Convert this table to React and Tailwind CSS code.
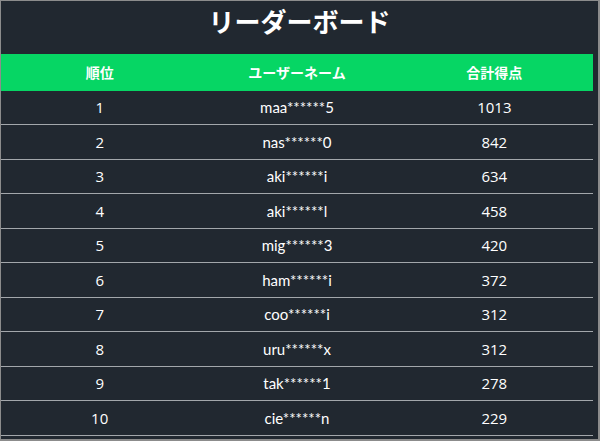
const rows = [
  { rank: 1, name: 'maa******5', score: 1013 },
  { rank: 2, name: 'nas******0', score: 842 },
  { rank: 3, name: 'aki******i', score: 634 },
  { rank: 4, name: 'aki******l', score: 458 },
  { rank: 5, name: 'mig******3', score: 420 },
  { rank: 6, name: 'ham******i', score: 372 },
  { rank: 7, name: 'coo******i', score: 312 },
  { rank: 8, name: 'uru******x', score: 312 },
  { rank: 9, name: 'tak******1', score: 278 },
  { rank: 10, name: 'cie******n', score: 229 },
];

export default function App() {
  return (
    <div
      className="w-[600px] h-[441px] overflow-hidden bg-[#212830] border-t border-l border-b-2 border-r-2 border-[#8c8c8c] text-white"
      style={{ fontFamily: '"Open Sans", "Noto Sans CJK JP", sans-serif' }}
    >
      {/* Title */}
      <h1 className="h-[42px] flex items-center justify-center text-[26px] font-bold leading-none">
        リーダーボード
      </h1>

      {/* Table */}
      <div className="mt-[11px] mr-[5px]">
        <div className="grid grid-cols-3 h-[36.5px] items-center bg-[#06d664] text-[14px] font-bold">
          <div className="text-center">順位</div>
          <div className="text-center">ユーザーネーム</div>
          <div className="text-center">合計得点</div>
        </div>
        {rows.map((r) => (
          <div
            key={r.rank}
            className="grid grid-cols-3 h-[34.5px] items-center border-b border-[#a3a7ab] text-[15px]"
          >
            <div className="text-center">{r.rank}</div>
            <div className="text-center" style={{ fontFamily: 'Lato, sans-serif' }}>{r.name}</div>
            <div className="text-center">{r.score}</div>
          </div>
        ))}
      </div>
    </div>
  );
}
